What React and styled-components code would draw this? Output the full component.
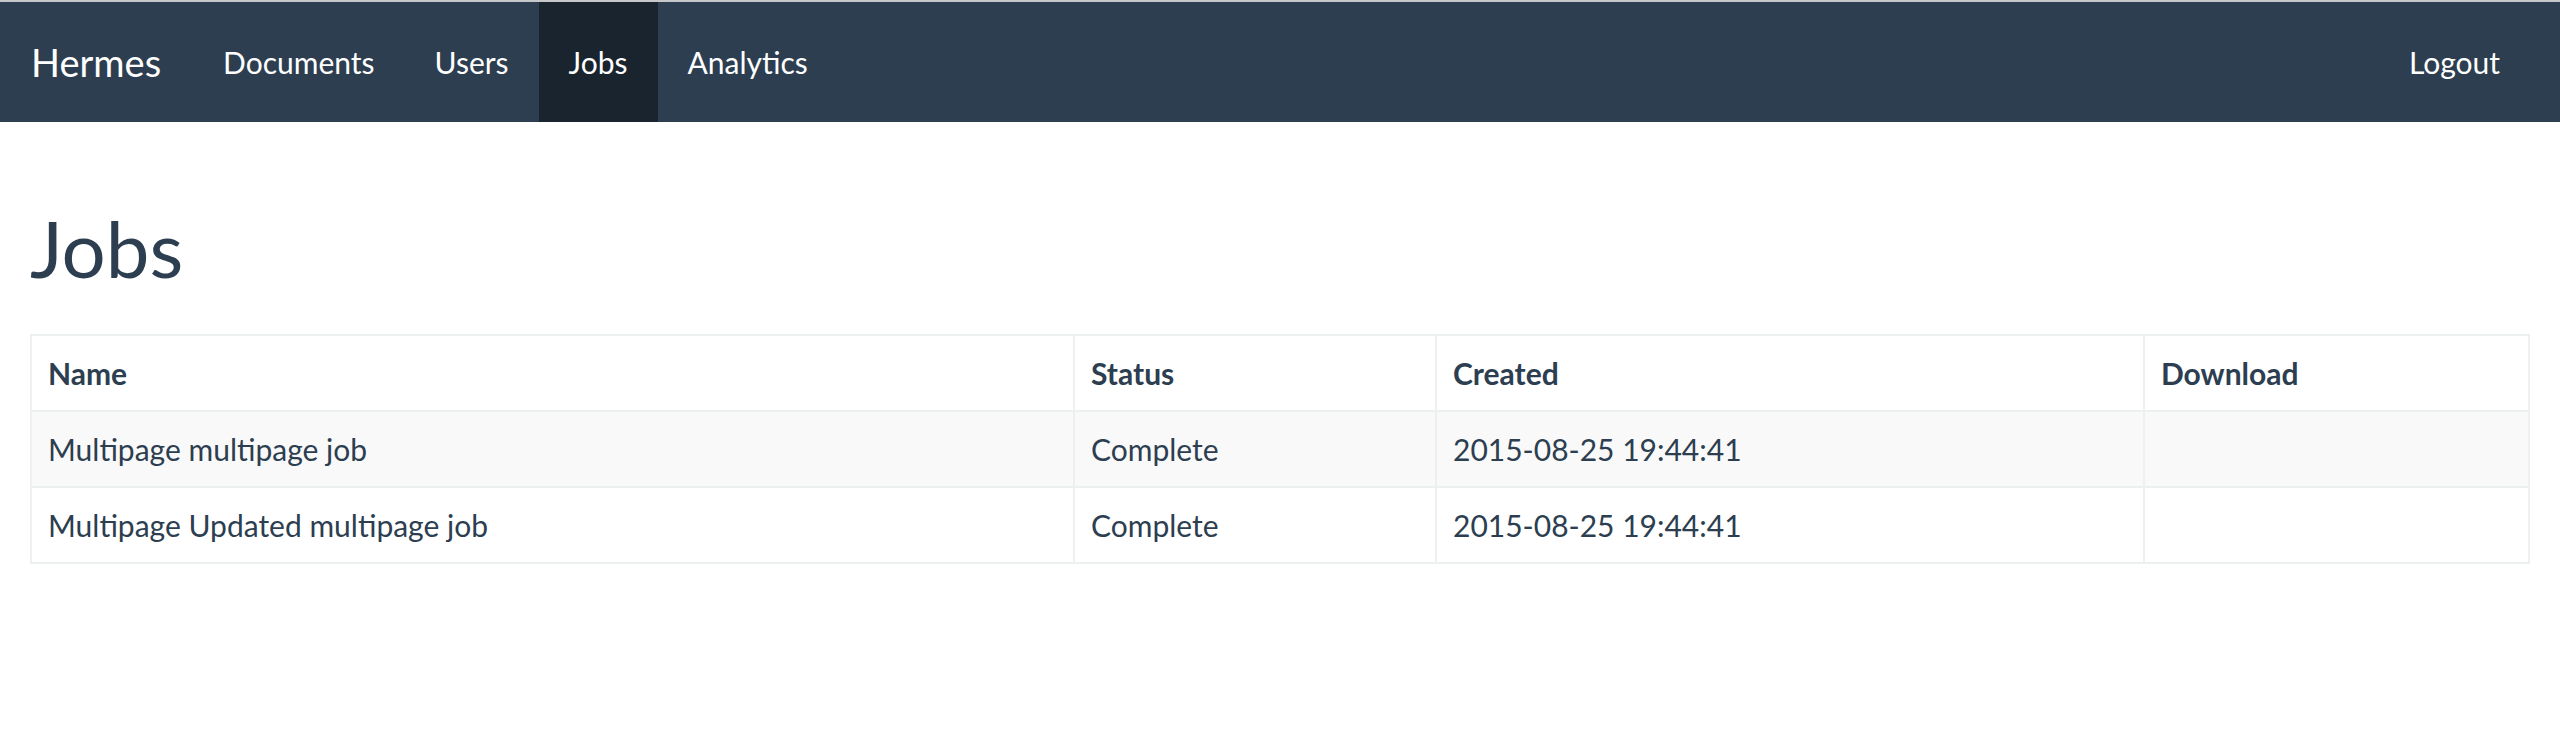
import React from 'react'
import styled, {createGlobalStyle} from 'styled-components'

const GlobalStyle = createGlobalStyle`
  html, body {
    margin: 0;
    padding: 0;
    background: #ffffff;
  }
  body {
    font-family: Lato, "Open Sans", "Liberation Sans", sans-serif;
    color: #2c3e50;
    font-size: 30px;
  }
  * { box-sizing: border-box; }
`

const Navbar = styled.nav`
  display: flex;
  align-items: stretch;
  height: 122px;
  background: #2c3e50;
  border-top: 2px solid #c6c8ca;
  margin-bottom: 42px;
`

const Brand = styled.a`
  display: block;
  padding: 0 32px 0 31px;
  font-size: 38px;
  line-height: 120px;
  color: #ffffff;
  text-decoration: none;
`

const NavList = styled.ul`
  display: flex;
  list-style: none;
  margin: 0;
  padding: 0;
  margin-left: ${props => props.right ? 'auto' : '0'};
  margin-right: ${props => props.right ? '30px' : '0'};
`

const NavLink = styled.a`
  display: block;
  padding: 0 30px;
  font-size: 30px;
  line-height: 120px;
  color: #ffffff;
  text-decoration: none;
  background: ${props => props.active ? '#1a242f' : 'transparent'};
`

const Container = styled.div`
  display: flow-root;
  padding: 0 30px;
`

const Title = styled.h1`
  font-size: 78px;
  font-weight: 400;
  line-height: 1.1;
  margin: 42px 0 42px;
  color: #2c3e50;
`

const Table = styled.table`
  width: 100%;
  border-collapse: collapse;
  border: 2px solid #ecf0f1;
  font-size: 30px;
`

const Th = styled.th`
  text-align: left;
  font-weight: 700;
  padding: 16px 16px;
  line-height: 42px;
  border: 2px solid #ecf0f1;
  width: ${props => props.w};
`

const Row = styled.tr`
  background: ${props => props.striped ? '#f9f9f9' : '#ffffff'};
`

const Td = styled.td`
  padding: 16px 16px;
  line-height: 42px;
  border: 2px solid #ecf0f1;
`

const jobs = [
  {name: 'Multipage multipage job', status: 'Complete', created: '2015-08-25 19:44:41'},
  {name: 'Multipage Updated multipage job', status: 'Complete', created: '2015-08-25 19:44:41'},
]

export default function App() {
  return (
    <>
      <GlobalStyle />
      <Navbar>
        <Brand href="#">Hermes</Brand>
        <NavList>
          <li><NavLink href="#">Documents</NavLink></li>
          <li><NavLink href="#">Users</NavLink></li>
          <li><NavLink href="#" active>Jobs</NavLink></li>
          <li><NavLink href="#">Analytics</NavLink></li>
        </NavList>
        <NavList right>
          <li><NavLink href="#">Logout</NavLink></li>
        </NavList>
      </Navbar>
      <Container>
        <Title>Jobs</Title>
        <Table>
          <thead>
            <tr>
              <Th w="1043px">Name</Th>
              <Th w="362px">Status</Th>
              <Th w="708px">Created</Th>
              <Th>Download</Th>
            </tr>
          </thead>
          <tbody>
            {jobs.map((job, i) => (
              <Row key={i} striped={i % 2 === 0}>
                <Td>{job.name}</Td>
                <Td>{job.status}</Td>
                <Td>{job.created}</Td>
                <Td></Td>
              </Row>
            ))}
          </tbody>
        </Table>
      </Container>
    </>
  )
}
